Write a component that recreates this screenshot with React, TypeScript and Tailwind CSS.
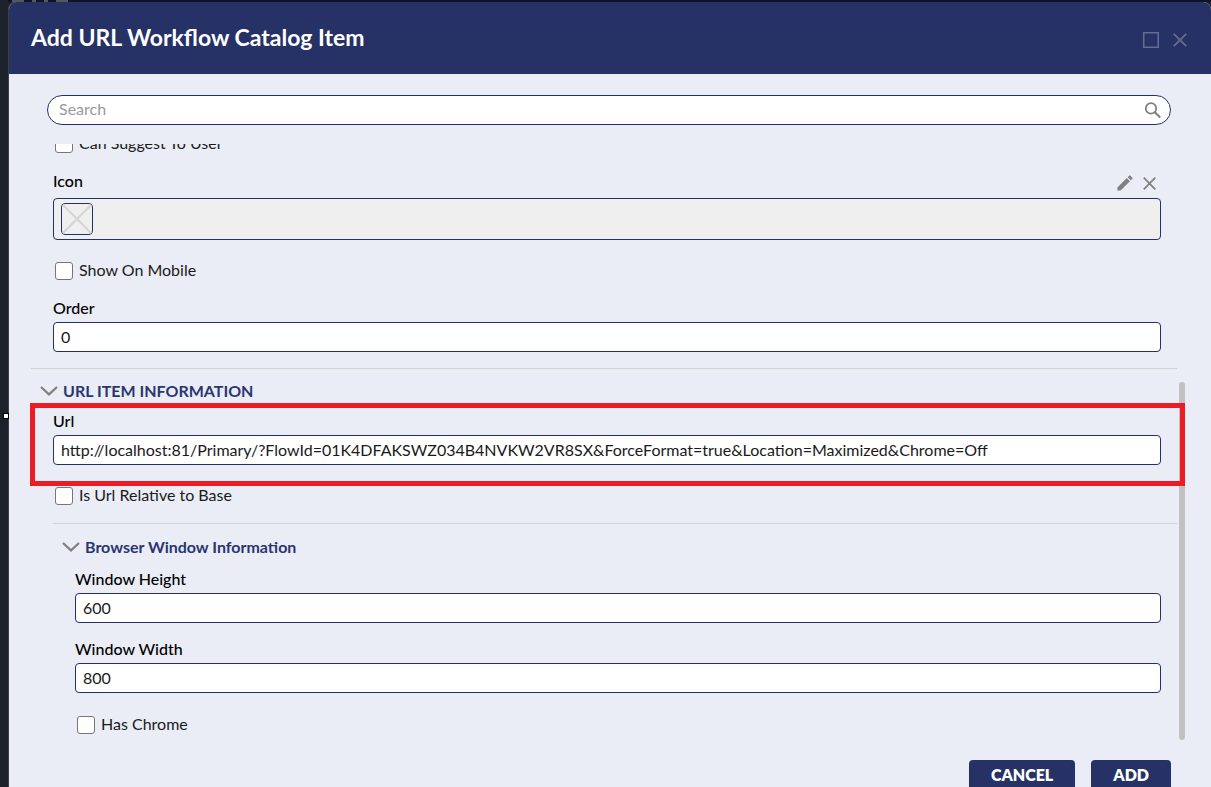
import { useId } from "react";
import type { ReactNode } from "react";

const INPUT =
  "block h-[30px] w-full rounded border border-[#253066] bg-white px-[7px] pb-0.5 text-base text-[#1a1a1a] outline-none";

const BUTTON =
  "h-8 shrink-0 rounded bg-[#263166] px-[22px] pb-0.5 text-base font-extrabold text-white";

function CloseIcon({ className }: { className: string }) {
  return (
    <svg viewBox="0 0 14 14" className={className} fill="none" stroke="currentColor" strokeWidth="1.9" aria-hidden="true">
      <path d="M0.8 0.8 L13.2 13.2 M13.2 0.8 L0.8 13.2" />
    </svg>
  );
}

function Field({ label, value }: { label: string; value: string }) {
  const id = useId();
  return (
    <div>
      <label htmlFor={id} className="block h-[26px] text-base leading-6 font-medium text-black">
        {label}
      </label>
      <input id={id} type="text" defaultValue={value} className={INPUT} />
    </div>
  );
}

function Check({ label }: { label: string }) {
  return (
    <label className="flex h-6 items-center gap-1.5 pl-0.5 text-base text-[#1a1a1a]">
      <input type="checkbox" className="size-[18px] shrink-0 appearance-none rounded-[3px] border border-[#767676] bg-white" />
      <span className="pb-0.5">{label}</span>
    </label>
  );
}

function SectionTitle({ children }: { children: ReactNode }) {
  return (
    <button type="button" className="flex h-6 items-center gap-[5px] text-base font-bold text-[#2b3670]">
      <svg viewBox="0 0 18 10" className="h-2.5 w-[18px]" fill="none" stroke="#808080" strokeWidth="2.2" aria-hidden="true">
        <path d="M1 1 L9 8.4 L17 1" />
      </svg>
      {children}
    </button>
  );
}

export default function App() {
  return (
    <div className="relative flex h-screen flex-col overflow-hidden bg-[#1b2229] pl-2 font-['Lato','Open_Sans',sans-serif]">
      <div className="flex h-0.5 shrink-0 items-end overflow-hidden bg-[#0e1327]">
        <div className="flex h-0.5 items-end gap-2 pl-1" aria-hidden="true">
          <i className="h-0.5 w-3 bg-[#55575f]" />
          <i className="h-0.5 w-1 bg-[#55575f]" />
          <i className="h-0.5 w-1 bg-[#55575f]" />
          <i className="h-0.5 w-3 bg-[#55575f]" />
        </div>
      </div>
      <span className="absolute top-[413px] left-[3px] size-1.5 border border-black bg-white" />

      <div role="dialog" aria-labelledby="dialog-title" className="flex min-h-0 flex-1 flex-col overflow-hidden rounded-t-lg border-l border-[#3d4147] bg-[#eaedf6]">
        <header className="flex h-[72px] shrink-0 items-center justify-between bg-[#263166] pr-6 pl-[22px]">
          <h1 id="dialog-title" className="pb-0.5 text-[23px] leading-8 font-bold text-white">
            Add URL Workflow Catalog Item
          </h1>
          <div className="flex items-center gap-3.5 pt-1 text-[#646c8f]">
            <button type="button" aria-label="Maximize">
              <svg viewBox="0 0 16 16" className="size-4" fill="none" stroke="currentColor" strokeWidth="1.5" aria-hidden="true">
                <rect x="0.75" y="0.75" width="14.5" height="14.5" />
              </svg>
            </button>
            <button type="button" aria-label="Close">
              <CloseIcon className="size-3.5" />
            </button>
          </div>
        </header>

        <div className="shrink-0 pt-[21px] pr-10 pb-[19px] pl-[38px]">
          <div className="flex h-[30px] items-center rounded-full border border-[#253066] bg-white pr-2 pl-[11px]">
            <input
              type="search"
              aria-label="Search"
              placeholder="Search"
              className="min-w-0 flex-1 bg-transparent pb-0.5 text-base outline-none placeholder:text-[#999999]"
            />
            <button type="button" aria-label="Run search" className="text-[#808080]">
              <svg viewBox="0 0 18 18" className="size-[18px]" fill="none" stroke="currentColor" strokeWidth="1.8" aria-hidden="true">
                <circle cx="7" cy="7.4" r="5.2" />
                <path d="M10.8 11.2 L16.2 16.6" strokeWidth="2.1" />
              </svg>
            </button>
          </div>
        </div>

        <div className="relative min-h-0 flex-1 overflow-hidden">
          <div className="-mt-3 pr-[34px] pl-[22px]">
            <div className="pr-4 pl-[22px]">
              <Check label="Can Suggest To User" />
              <div className="mt-2.5 flex h-8 items-center justify-between pr-[5px]">
                <span className="pb-0.5 text-base font-medium text-black">Icon</span>
                <div className="flex items-center gap-2.5 pt-0.5 text-[#808080]">
                  <button type="button" aria-label="Edit icon">
                    <svg viewBox="2.5 2.5 19 19" className="size-4" fill="currentColor" aria-hidden="true">
                      <path d="M3 17.25V21h3.75L17.81 9.94l-3.75-3.75L3 17.25zM20.71 7.04a1 1 0 0 0 0-1.41l-2.34-2.34a1 1 0 0 0-1.41 0l-1.83 1.83 3.75 3.75 1.83-1.83z" />
                    </svg>
                  </button>
                  <button type="button" aria-label="Remove icon">
                    <CloseIcon className="size-[13px]" />
                  </button>
                </div>
              </div>
              <div className="flex h-[42px] items-center rounded border border-[#253066] bg-[#efefef] px-[7px]">
                <div className="size-8 overflow-hidden rounded border border-[#253066]">
                  <svg viewBox="0 0 30 30" className="size-full" stroke="#d5d5d5" strokeWidth="2" aria-hidden="true">
                    <path d="M0 0 L30 30 M30 0 L0 30" />
                  </svg>
                </div>
              </div>
              <div className="mt-[19px] mb-[13px]">
                <Check label="Show On Mobile" />
              </div>
              <Field label="Order" value="0" />
            </div>

            <section className="mt-4 border-t border-[#d3d3d3] pt-2.5">
              <div className="pl-[9px]">
                <SectionTitle>URL ITEM INFORMATION</SectionTitle>
              </div>
              <div className="relative mt-1.5 pr-4 pl-[22px]">
                <Field
                  label="Url"
                  value="http://localhost:81/Primary/?FlowId=01K4DFAKSWZ034B4NVKW2VR8SX&ForceFormat=true&Location=Maximized&Chrome=Off"
                />
                <div className="pointer-events-none absolute -top-1.5 -right-2 -bottom-[21px] -left-px z-10 border-5 border-[#ed1c24]" />
              </div>
              <div className="mt-[19px] pl-[22px]">
                <Check label="Is Url Relative to Base" />
              </div>

              <section className="mt-[15px] ml-[22px] border-t border-[#d3d3d3] pt-[11px]">
                <div className="pl-[9px]">
                  <SectionTitle>Browser Window Information</SectionTitle>
                </div>
                <div className="flex flex-col gap-3.5 pt-2 pr-4 pl-[22px]">
                  <Field label="Window Height" value="600" />
                  <Field label="Window Width" value="800" />
                  <div className="pt-1.5">
                    <Check label="Has Chrome" />
                  </div>
                </div>
              </section>
            </section>
          </div>
          <div className="absolute right-[26px] bottom-px h-[60%] w-1.5 rounded-full bg-[#c1c1c1]" />
        </div>

        <footer className="flex h-[46px] shrink-0 items-start justify-end gap-4 pt-[19px] pr-10">
          <button type="button" className={BUTTON}>
            CANCEL
          </button>
          <button type="button" className={BUTTON}>
            ADD
          </button>
        </footer>
      </div>
    </div>
  );
}
